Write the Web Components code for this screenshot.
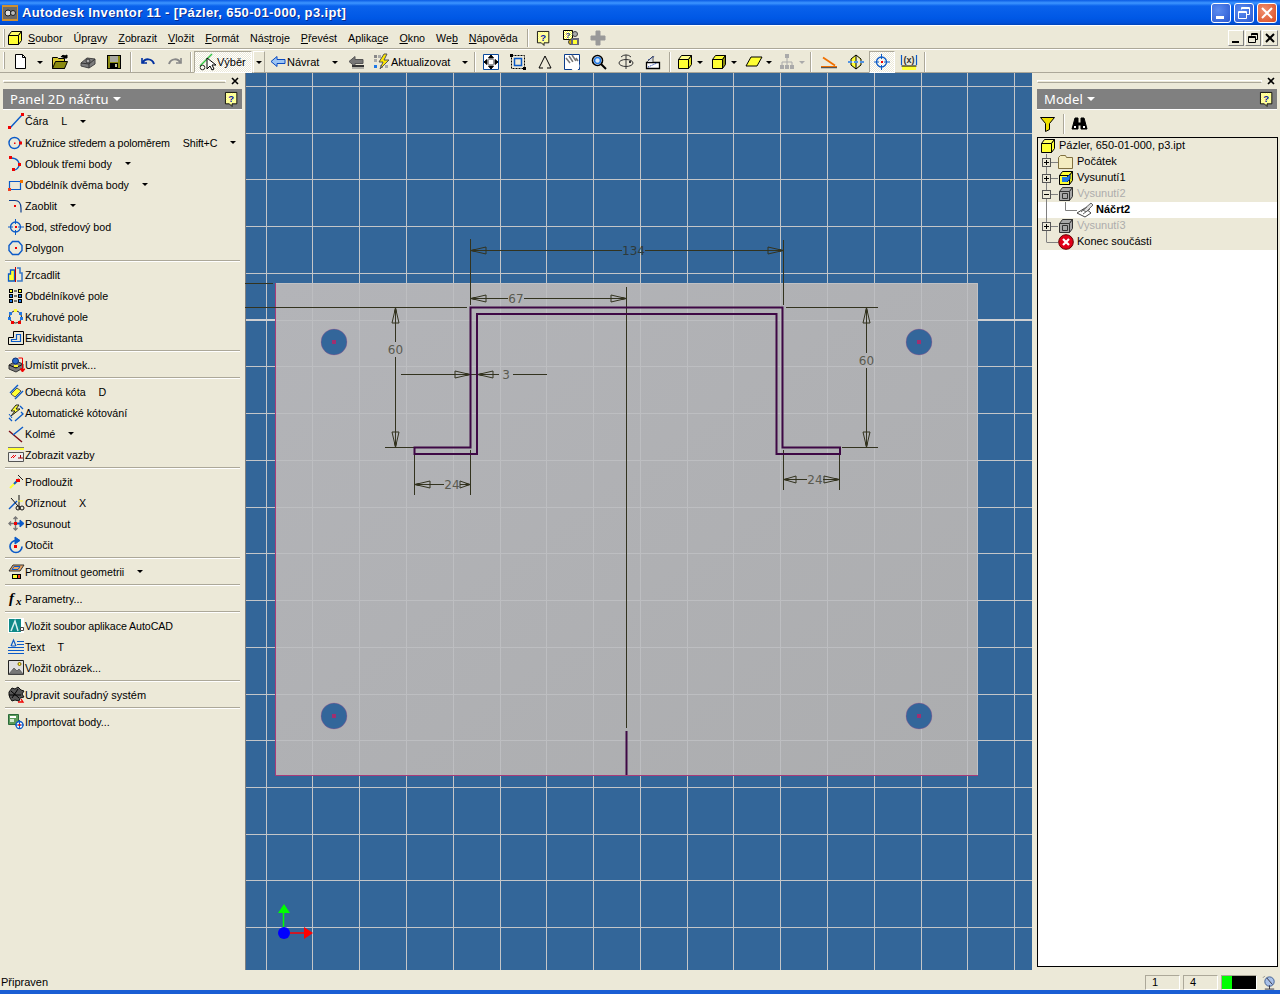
<!DOCTYPE html>
<html lang="cs">
<head>
<meta charset="utf-8">
<title>Autodesk Inventor 11</title>
<style>
    html, body { margin: 0; height: 100%; overflow: hidden; }
    body { font: 11px "Liberation Sans", Tahoma, sans-serif; color: #000; background: #ece9d8; }
</style>
</head>
<body>
<inv-app>
    <inv-titlebar slot="title">Autodesk Inventor 11 - [Pázler, 650-01-000, p3.ipt]</inv-titlebar>
    <inv-menubar slot="menu">
        <inv-menu-item><u>S</u>oubor</inv-menu-item>
        <inv-menu-item>Úpr<u>a</u>vy</inv-menu-item>
        <inv-menu-item><u>Z</u>obrazit</inv-menu-item>
        <inv-menu-item><u>V</u>ložit</inv-menu-item>
        <inv-menu-item><u>F</u>ormát</inv-menu-item>
        <inv-menu-item>Nás<u>t</u>roje</inv-menu-item>
        <inv-menu-item><u>P</u>řevést</inv-menu-item>
        <inv-menu-item>Aplika<u>c</u>e</inv-menu-item>
        <inv-menu-item><u>O</u>kno</inv-menu-item>
        <inv-menu-item>We<u>b</u></inv-menu-item>
        <inv-menu-item><u>N</u>ápověda</inv-menu-item>
    </inv-menubar>
    <inv-toolbar slot="tools">
        <inv-tool icon="new" w="26"></inv-tool><inv-drop w="12"></inv-drop>
        <inv-tool icon="open" w="28"></inv-tool><inv-tool icon="part3d" w="27"></inv-tool><inv-tool icon="save" w="26"></inv-tool>
        <inv-sep w="7"></inv-sep>
        <inv-tool icon="undo" w="27"></inv-tool><inv-tool icon="redo" w="27"></inv-tool>
        <inv-sep w="6"></inv-sep>
        <inv-tool icon="select" w="58" pressed>Výběr</inv-tool><inv-drop w="13" boxed></inv-drop>
        <inv-tool icon="back" w="63">Návrat</inv-tool><inv-drop w="14"></inv-drop>
        <inv-tool icon="backgrey" w="27"></inv-tool>
        <inv-tool icon="update" w="88">Aktualizovat</inv-tool><inv-drop w="16"></inv-drop>
        <inv-sep w="4"></inv-sep>
        <inv-tool icon="zoomall" w="27"></inv-tool><inv-tool icon="zoomwin" w="27"></inv-tool><inv-tool icon="zoomsel" w="27"></inv-tool><inv-tool icon="pan" w="27"></inv-tool><inv-tool icon="zoom" w="27"></inv-tool><inv-tool icon="orbit" w="27"></inv-tool><inv-tool icon="look" w="27"></inv-tool>
        <inv-sep w="8"></inv-sep>
        <inv-tool icon="box1" w="22"></inv-tool><inv-drop w="8"></inv-drop>
        <inv-tool icon="box2" w="22" style="margin-left:4px"></inv-tool><inv-drop w="8"></inv-drop>
        <inv-tool icon="plane" w="22" style="margin-left:5px"></inv-tool><inv-drop w="8"></inv-drop>
        <inv-tool icon="treeicon" w="22" style="margin-left:3px"></inv-tool><inv-drop w="8" disabled></inv-drop>
        <inv-sep w="9"></inv-sep>
        <inv-tool icon="angle" w="27"></inv-tool><inv-tool icon="sym" w="27"></inv-tool><inv-tool icon="bod" w="26" pressed></inv-tool><inv-tool icon="fxbar" w="28"></inv-tool>
        <inv-sep w="3"></inv-sep>
    </inv-toolbar>
    <inv-panel slot="left" label="Panel 2D náčrtu" style="width:245px">
        <inv-item icon="cara" shortcut="L" arrow style="height:22px">Čára</inv-item>
        <inv-item icon="kruznice" shortcut="Shift+C" arrow style="letter-spacing:-.13px">Kružnice středem a poloměrem</inv-item>
        <inv-item icon="oblouk" arrow>Oblouk třemi body</inv-item>
        <inv-item icon="obdelnik" arrow>Obdélník dvěma body</inv-item>
        <inv-item icon="zaoblit" arrow>Zaoblit</inv-item>
        <inv-item icon="bod">Bod, středový bod</inv-item>
        <inv-item icon="polygon">Polygon</inv-item>
        <inv-divider></inv-divider>
        <inv-item icon="zrcadlit">Zrcadlit</inv-item>
        <inv-item icon="obdpole">Obdélníkové pole</inv-item>
        <inv-item icon="kruhpole">Kruhové pole</inv-item>
        <inv-item icon="ekvi">Ekvidistanta</inv-item>
        <inv-divider></inv-divider>
        <inv-item icon="umistit">Umístit prvek...</inv-item>
        <inv-divider></inv-divider>
        <inv-item icon="kota" shortcut="D">Obecná kóta</inv-item>
        <inv-item icon="autokota">Automatické kótování</inv-item>
        <inv-item icon="kolme" arrow>Kolmé</inv-item>
        <inv-item icon="vazby">Zobrazit vazby</inv-item>
        <inv-divider></inv-divider>
        <inv-item icon="prodlouzit">Prodloužit</inv-item>
        <inv-item icon="oriznout" shortcut="X">Oříznout</inv-item>
        <inv-item icon="posunout">Posunout</inv-item>
        <inv-item icon="otocit">Otočit</inv-item>
        <inv-divider></inv-divider>
        <inv-item icon="promitnout" arrow>Promítnout geometrii</inv-item>
        <inv-divider></inv-divider>
        <inv-item icon="fx">Parametry...</inv-item>
        <inv-divider></inv-divider>
        <inv-item icon="autocad" style="letter-spacing:-.1px">Vložit soubor aplikace AutoCAD</inv-item>
        <inv-item icon="text" shortcut="T">Text</inv-item>
        <inv-item icon="obrazek">Vložit obrázek...</inv-item>
        <inv-divider></inv-divider>
        <inv-item icon="souradny" style="font-size:11px">Upravit souřadný systém</inv-item>
        <inv-divider></inv-divider>
        <inv-item icon="importbody">Importovat body...</inv-item>
    </inv-panel>
    <inv-viewport slot="canvas"></inv-viewport>
    <inv-panel slot="right" label="Model" model style="width:248px">
        <inv-browser>
            <inv-node icon="root" level="0">Pázler, 650-01-000, p3.ipt</inv-node>
            <inv-node icon="folder" level="1" exp="+">Počátek</inv-node>
            <inv-node icon="extrude" level="1" exp="+">Vysunutí1</inv-node>
            <inv-node icon="extrudeoff" level="1" exp="-" muted>Vysunutí2</inv-node>
            <inv-node icon="sketch" level="2" selected>Náčrt2</inv-node>
            <inv-node icon="extrudeoff" level="1" exp="+" muted>Vysunutí3</inv-node>
            <inv-node icon="stop" level="1" last>Konec součásti</inv-node>
        </inv-browser>
    </inv-panel>
    <inv-statusbar slot="status">Připraven</inv-statusbar>
</inv-app>

<script>
    const r = (x, y, w, h, c) => `<rect x="${x}" y="${y}" width="${w}" height="${h}" fill="${c}"/>`;
    const p = (d, s = "#000", f = "none", w = 1) => `<path d="${d}" stroke="${s}" fill="${f}" stroke-width="${w}"/>`;
    const c = (x, y, rad, s, f = "none", w = 1) => `<circle cx="${x}" cy="${y}" r="${rad}" stroke="${s}" fill="${f}" stroke-width="${w}"/>`;
    const BLUE = "#0a5ac8", RED = "#f00000", YEL = "#ffff33";

    const cube = (f, s = "#000", top = f, side = f) =>
        p("M1.5 5.5h10v9h-10z", s, f) + p("M1.5 5.5l3-4h10l-3 4z", s, top) + p("M11.5 5.5l3-4v9l-3 4z", s, side);
    const dither = `<defs><pattern id="dith" width="2" height="2" patternUnits="userSpaceOnUse"><rect width="2" height="2" fill="#ffff33"/><rect width="1" height="1" fill="#fff"/><rect x="1" y="1" width="1" height="1" fill="#fff"/></pattern></defs>`;

    // 16x16 icons, drawn after the reference's toolbar and panel glyphs
    const ICONS = {
        cara: p("M2 15L14 2", BLUE, "none", 1.4) + r(0, 13, 3, 3, RED) + r(13, 0, 3, 3, RED),
        kruznice: c(6.5, 8, 5.5, BLUE, "none", 1.4) + r(6, 7.5, 1.5, 1.5, RED) + r(11, 6.5, 3, 3, RED),
        oblouk: p("M3 2c6 0 9 4 8 8-1 2-2 4-5 4", BLUE, "none", 1.3) + r(1, 0, 3, 3, RED) + r(10, 7, 3, 3, RED) + r(4, 12, 3, 3, RED),
        obdelnik: p("M1.5 4.5h11v8h-11z", BLUE, "none", 1.2) + r(0, 11, 3, 3, "#f04020") + r(12, 3, 3, 3, "#f07000"),
        zaoblit: p("M1 2.5h6c4 0 6 3 6 8v4", "#0a3c8c", "none", 1.2) + r(6, 7, 2, 2, RED),
        bod: c(7.5, 8, 5, BLUE, "none", 1.3) + p("M7.5 0v5M7.5 11v5M0 8h5M10 8h6", BLUE) + r(7, 7, 2, 2, RED),
        polygon: p("M4.5 1.5h6l3.5 4v5l-3.5 4h-6l-3.5-4v-5z", BLUE, "none", 1.4) + r(7, 7, 2, 2, RED),
        zrcadlit: p("M.5 14V7h2V3h4v11z", "#0a5ac8", YEL, 1.3) + p("M9 14h5V6h-2V1H9", "#3c7ac8", "none", 1.6) + p("M7.5 0v15", "#c00000"),
        obdpole: [1, 10].map(x => [1, 6, 11].map(y => `<rect x="${x}.5" y="${y}.5" width="3" height="3" stroke="#000" fill="${y == 1 ? YEL : "#1e78e6"}"/>`).join("")).join("") + p("M6 3h3M6 8h3M6 13h3", "#000"),
        kruhpole: c(7.5, 8, 6, "#222") + r(6, 0, 3, 3, YEL) + r(1, 3, 3, 3, "#1e78e6") + r(11, 3, 3, 3, "#1e78e6") + r(0, 8, 3, 3, "#1e78e6") + r(12, 8, 3, 3, "#1e78e6") + r(3, 12, 3, 3, RED) + r(10, 12, 3, 3, RED),
        ekvi: p("M.5 14.5v-7h5v-6h10v13z", "#000", "none") + p("M3.5 11.5v-2h5v-5h4v7z", "#0a5ac8", "none", 1.2),
        umistit: p("M1 8l7-4 7 3v4l-7 4-7-3z", "#333", "#7a7a7a") + p("M1 8l7 3 7-4", "#111") + c(7.5, 4, 3, "#0a2c70", "#2868c8") + r(6, 8, 4, 2, YEL) + p("M14.5 1h-4M14.5 1v11", RED) + p("M12 12h5l-2.500 3z", RED, RED),
        kota: p("M2 9L10 1", BLUE, "none", 1.4) + p("M7 15l8-8", BLUE, "none", 1.4) + p("M3 10l6-6 4 3-6 6z", "#555", YEL),
        autokota: p("M8 0L3 6h4L3 11l9-7H8l3-4z", "#222", YEL) + p("M12 1l3 3M1 13l3 3M13 7l2 2-8 7", BLUE, "none", 1.3) + p("M1 9l3 4", BLUE),
        kolme: p("M1 5l13 11", "#7a0a14", "none", 1.4) + p("M5 9l10-8", BLUE, "none", 1.4),
        vazby: r(0, 0, 16, 3, YEL) + p("M0 .5h16", "#777") + p("M.5 5.500h15v9h-15z", "#555", "#eee") + p("M3 11l3-3M5 11l3-3", RED) + p("M10 11h5M12.500 8v3", "#a00000"),
        prodlouzit: p("M2 14L11 5", YEL, "none", 2) + p("M6 10l5-5", "#0a5ac8", "none", 2) + r(8, 5, 4, 3, RED) + p("M10 1l5 5", "#222"),
        oriznout: p("M1 14l8-8", BLUE, "none", 1.4) + p("M3 3l7 8M11 0v14", "#111") + c(10, 13, 2, "#111") + c(14, 13, 2, "#111") + p("M10 6h5", YEL),
        posunout: p("M7.500 1v13M1 7.500h8", "#777", "none", 1.4) + p("M5.500 3l2-2 2 2M5.500 12l2 2 2-2M3 5.500l-2 2 2 2", "#777", "none", 1.4) + p("M9 7.500h5", BLUE, "none", 2) + p("M12 4l4 3.500-4 3.500z", BLUE, BLUE) + r(6, 6, 3, 3, RED),
        otocit: p("M8 3.500a6 6 0 1 0 6 6", BLUE, "none", 1.7) + p("M7 0l5 3.500-5 3.500z", BLUE, BLUE) + r(6, 8, 3, 3, RED),
        promitnout: p("M5 1h11l-4 6H1z", "#333", "#f0a860") + p("M6 2.500h6l-2 3H4z", BLUE, "none") + r(4, 10, 9, 5, "#000") + r(5, 11, 4, 3, YEL) + r(10, 11, 2, 3, "#f04020"),
        fx: `<text x="1" y="12" font-family="Liberation Serif" font-style="italic" font-weight="700" font-size="15">f</text><text x="8" y="14" font-family="Liberation Serif" font-style="italic" font-weight="700" font-size="11">x</text>`,
        autocad: r(0, 0, 16, 15, "#fff") + r(1, 1, 12, 13, "#0f8a88") + p("M3 13L7 3l3 10", "#d8f0f0", "none", 1.5) + p("M12.500 9.500h3v3h-3z", "#444", "#fff"),
        text: p("M3 7L5.500 1 8 7M3.500 7h4", BLUE, "none", 1.2) + p("M9 2.500h7M9 5.500h7M0 8.500h16M0 11.500h16M0 14.500h16", BLUE),
        obrazek: p("M.5 .5h15v14H.5z", "#222", "#dfdfdf") + c(11.5, 4, 1.5, "#806000", YEL) + p("M1 14l5-6 3 3 2-2 4 5z", "#666", "#777"),
        souradny: p("M1 5l3-4 3 1 3-2 3 3 3 1-2 3 2 3-4 1-1 3-4-1-3 1-2-3-1-3z", "#111", "#555") + p("M3 4l8 7M10 2L4 11M1 8h12", "#000") + p("M10 15h5l-2-3", RED, "none", 1.3),
        importbody: p("M.5 .5h10v10H.5z", "#2a6a3a", "#5a9a5a") + r(2, 2, 6, 2, "#fff") + r(2, 5, 4, 3, "#cfe8cf") + c(11.5, 11, 3.5, BLUE, "#fff", 1.3) + p("M11.500 6v9M7 11h9", BLUE) + r(10.5, 10, 2, 2, RED),

        new: p("M2.500 .5h7l3 3v11h-10z", "#000", "#fff") + p("M9.500 .5v3h3", "#000"),
        open: p("M.5 14.500v-11h5l1 1h6v10z", "#000", "#d8c830") + p("M.5 14.500l3-7h12l-3 7z", "#000", "#8a8a10") + p("M9 3c1-2 3-2 4-1l2-1v3h-3", "#000", "#000"),
        part3d: p("M1 9l6-5 8 1v5l-6 4-8-2z", "#444", "#7c7c7c") + p("M1 9l8 1 6-5M9 10v4", "#333") + c(8, 7, 2, "#333", "#aaa"),
        save: r(1, 1, 14, 14, "#000") + r(2, 2, 12, 12, "#8a8a10") + r(4, 2, 8, 6, "#a8a8a0") + r(4, 9, 8, 5, "#000") + r(9, 10, 2, 3, "#c8c8a8"),
        undo: p("M2 4v5h5", "#0030a0", "none", 1.6) + p("M2.500 9C5 4 12 4 14 10", "#0030a0", "none", 2),
        redo: p("M14 4v5H9", "#888", "none", 1.6) + p("M13.500 9C11 4 4 4 2 10", "#888", "none", 2),
        select: p("M0 12L12 0", "#30c040", "none", 1.4) + c(2.500, 13.500, 2.300, "#333") + p("M7 4v11l3-3 2 4 2-1-2-4h4z", "#000", "#fff"),
        back: p("M1 7.500l6-5v3h8v4H7v3z", "#0a4ac0", "#9cc4f4"),
        backgrey: p("M1 7.500l6-5v3h8v4H7v3z", "#555", "#777") + p("M4 12h12", "#333", "none", 2) + p("M4 14h12", "#777"),
        update: r(0, 1, 3, 3, "#888") + r(4, 1, 3, 3, "#aaa") + r(0, 5, 3, 3, "#aaa") + r(0, 11, 3, 3, "#1e78e6") + r(11, 11, 3, 3, "#aaa") + r(6, 11, 3, 3, "#999") + p("M10 0L5 8h4L6 15l9-9h-5l3-6z", "#555", "#ffe800"),
        zoomall: p("M.5 .5h15v15H.5z", "#0a4a9c", "#fff", 1) + p("M8 1l-2.500 3h5zM8 15l-2.500-3h5zM1 8l3-2.500v5zM15 8l-3-2.500v5z", "#000", "#000") + `<path d="M5.500 5.500h5v5h-5z" stroke="#333" fill="none" stroke-dasharray="1 1"/>`,
        zoomwin: `<path d="M1.500 1.500h13v13h-13z" stroke="#000" fill="none" stroke-dasharray="2 1"/>` + r(0, 0, 3, 3, "#000") + r(13, 13, 3, 3, "#000") + p("M4.500 4.500h7v7h-7z", "#0a5ac8", "#ece9d8", 1.500),
        zoomsel: p("M5 8l3-6 3 6M2 14l3-6M14 14l-3-6M2 14h4M10 14h4", "#000"),
        pan: p("M.5 .5h15v15H.5z", "#0a3c8c", "#fff", 1) + p("M2 4l4 5M5 2l4 6M8 1l4 6M12 4l2 3", "#777", "none", 1.500) + `<circle cx="11" cy="12" r="4.500" fill="#fff"/>`,
        zoom: c(6.5, 6.5, 5, "#000", "#fff", 1.6) + c(6.5, 6.5, 3, "#1e78e6", "#d8e8f8", 1.5) + p("M10 10l5 5", "#000", "none", 2),
        orbit: `<ellipse cx="8" cy="9" rx="7" ry="3.500" stroke="#333" fill="none"/>` + p("M8 1v14", "#333") + p("M3 3a7 7 0 0 1 10 0", "#333") + r(11, 7, 2, 2, "#333"),
        look: p("M1.500 8.500h13v6h-13z", "#000", "#fff", 1.3) + p("M2 8l6-6v6", "#555", "#ddd") + `<path d="M3 13l9-4M3 6l7-4" stroke="#0a2c9c" fill="none" stroke-dasharray="1 1"/>`,
        box1: cube(YEL, "#000", "#ffff88", "#e0e020"),
        box2: cube(YEL, "#000", YEL, "#8a8a10"),
        plane: p("M5 3h11l-5 9H0z", "#000", YEL),
        treeicon: r(6, 0, 4, 4, "#aaa") + r(1, 11, 4, 4, "#aaa") + r(6, 11, 4, 4, "#aaa") + r(11, 11, 4, 4, "#aaa") + p("M8 4v7M3 11V8h10v3", "#aaa"),
        angle: p("M2 3.500l12 8", "#f07000", "none", 1.800) + p("M0 13.500h16", "#555", "none", 1.500) + p("M0 12.500h16", "#f07000"),
        sym: p("M3 7V5l5-4v6M13 7V5L8 1M3 9v2l5 4V9M13 9v2l-5 4", "#000", YEL) + `<path d="M0 8h16" stroke="#1e78e6" stroke-width="1.300" stroke-dasharray="4 2"/>`,
        fxbar: r(1, 12, 14, 4, YEL) + p("M.5 12h15", "#000") + p("M.5 1v10M15.500 1v10", "#0a5ac8", "none", 1.200) + `<text x="8" y="9" text-anchor="middle" font-family="Liberation Sans" font-weight="700" font-size="9" fill="#333">(x)</text>`,

        root: cube(YEL, "#000", "#ffff66", YEL),
        folder: p("M.5 14.500V3.500l2-2h5l1 2h6v11z", "#807040", "#f4ecc0"),
        extrude: cube(YEL, "#000", YEL, "#e0e020") + r(4, 7, 5, 5, "#1e78e6") + p("M9 7l3-3v5l-3 3", "#0a2c70", "#1e78e6"),
        extrudeoff: cube("#a8a8a8", "#333") + p("M4.500 7.500h5v5h-5z", "#333"),
        sketch: p("M0 11l8-5 6 5-6 4z", "#444", "#fff") + p("M6 8l8-7 2 2-7 7zM4 10l6-5M6 12l7-5", "#666", "#ddd"),
        stop: c(8, 8, 7.300, "#600", "#e00018") + p("M5 5l6 6M11 5l-6 6", "#fff", "none", 2.200),

        filter: p("M.5 1.500h14l-5 6v6l-4 2v-8z", "#000", "#f0e000"),
        binoculars: p("M3 2h3v5h3V2h3l3 11H9V9H6v4H0z", "#000", "#000") + r(2, 10, 2, 2, "#fff") + r(11, 10, 2, 2, "#fff"),
        dish: c(8, 7, 5, "#3a5a90", "#a8c0e8") + p("M5 3l6 7M3 15h10M8 11v4", "#334") + p("M1 3l2-2", "#888"),
        appicon: r(0, 0, 16, 16, "#d09030") + r(1, 2, 14, 12, "#6a6a6a") + c(6, 8, 3, "#222", "#ddd") + c(11, 8, 2.500, "#222", "#bbb"),
        help: dither + p("M.5 .5h13v13H8v3l-3-3H.5z", "#000", "url(#dith)") + `<text x="7" y="11" text-anchor="middle" font-family="Liberation Sans" font-weight="700" font-size="11" fill="#0a1aa0">?</text>`,
        helpmix: dither + p("M.5 .5h9v9H.5z", "#000", "url(#dith)") + `<text x="5" y="8" text-anchor="middle" font-family="Liberation Sans" font-weight="700" font-size="8" fill="#0a1aa0">?</text>` + c(12, 4, 2.500, "#444", "#aaa") + c(8, 12, 2.500, "#444", "#d4b000") + r(8, 8, 8, 7, "#667") + r(10, 10, 4, 4, YEL),
        plus: p("M6 1h4v5h5v4h-5v5H6v-5H1V6h5z", "#999", "#999"),
    };
    const icon = (name, size = 16) => `<svg width="${size}" height="${size}" viewBox="0 0 16 16" style="display:block;flex:none;overflow:visible">${ICONS[name] || ""}</svg>`;

    class InvApp extends HTMLElement {
        constructor() {
            super();
            this.attachShadow({ mode: "open" });
            this.shadowRoot.innerHTML = `
                <style>
                    :host { display: flex; flex-direction: column; width: 1280px; height: 994px; }
                    #main { display: flex; height: 897px; }
                    #edge { height: 4px; background: #1a5ed4; }
                </style>
                <slot name="title"></slot>
                <slot name="menu"></slot>
                <slot name="tools"></slot>
                <div id="main">
                    <slot name="left"></slot>
                    <slot name="canvas"></slot>
                    <slot name="right"></slot>
                </div>
                <slot name="status"></slot>
                <div id="edge"></div>
            `;
        }
    }

    class InvTitlebar extends HTMLElement {
        constructor() {
            super();
            this.attachShadow({ mode: "open" });
            this.shadowRoot.innerHTML = `
                <style>
                    :host {
                        display: flex; align-items: center; height: 26px; padding-left: 2px; box-sizing: border-box;
                        background: linear-gradient(#0a5be4 0, #3d95ff 3px, #0a62ec 6px, #0058e6 18px, #0050d8 23px, #003ea8 26px);
                        border-bottom: 1px solid #fff;
                    }
                    #text {
                        flex: 1; margin-left: 4px; color: #fff; font: bold 13px "Liberation Sans", sans-serif;
                        letter-spacing: .38px; text-shadow: 1px 1px #0a2c90;
                    }
                    .b {
                        width: 18px; height: 18px; margin-right: 3px; border: 1px solid #fff; border-radius: 3px;
                        background: radial-gradient(circle at 35% 35%, #5c8cf0, #2a58d0); position: relative;
                    }
                    .b svg { display: block; }
                    #close { background: radial-gradient(circle at 35% 35%, #f09070, #d84a20); }
                </style>
                ${icon("appicon")}
                <span id="text"><slot></slot></span>
                <div class="b"><svg width="18" height="18"><rect x="4" y="12" width="8" height="3" fill="#fff"/></svg></div>
                <div class="b"><svg width="18" height="18" fill="none" stroke="#fff"><path d="M6.500 5.500v-2h8v7h-3"/><path d="M3.500 7.500h8v7h-8z"/><path d="M6.500 4.500h8M3.500 8.500h8"/></svg></div>
                <div class="b" id="close"><svg width="18" height="18" stroke="#fff" stroke-width="2"><path d="M4 4l10 10M14 4L4 14"/></svg></div>
            `;
        }
    }

    class InvMenubar extends HTMLElement {
        constructor() {
            super();
            this.attachShadow({ mode: "open" });
            this.shadowRoot.innerHTML = `
                <style>
                    :host {
                        display: flex; align-items: center; height: 24px; padding-left: 3px; box-sizing: border-box;
                        background: #ece9d8; border-bottom: 1px solid #fff; box-shadow: inset 0 -1px #aca899;
                    }
                    #grip { width: 1px; height: 18px; background: #fff; border-right: 1px solid #aca899; margin-right: 2px; }
                    #items { display: flex; gap: 11px; margin-left: 5px; padding-top: 1px; font-size: 10.7px; }
                    #sep { width: 1px; height: 18px; background: #aca899; border-right: 1px solid #fff; margin: 0 8px 0 9px; }
                    .ext { margin-right: 9px; }
                    #mdi { margin-left: auto; display: flex; gap: 1px; margin-right: 2px; }
                    .m { width: 16px; height: 16px; background: #ece9d8; border-top: 1px solid #fff; border-left: 1px solid #fff; border-right: 1px solid #808080; border-bottom: 1px solid #808080; box-sizing: border-box; }
                </style>
                <div id="grip"></div>
                ${icon("root")}
                <div id="items"><slot></slot></div>
                <div id="sep"></div>
                <div class="ext">${icon("help", 14)}</div>
                <div class="ext" style="margin-left:3px">${icon("helpmix")}</div>
                <div class="ext" style="margin-left:2px">${icon("plus")}</div>
                <div id="mdi">
                    <div class="m"><svg width="14" height="14"><rect x="3" y="10" width="7" height="2"/></svg></div>
                    <div class="m"><svg width="14" height="14" fill="none" stroke="#000"><path d="M5.500 4.500v-2h6v6h-2"/><path d="M2.500 5.500h7v6h-7z"/><path d="M5.500 3.500h6M2.500 6.500h7"/></svg></div>
                    <div class="m"><svg width="14" height="14" stroke="#000" stroke-width="2"><path d="M3 3l8 8M11 3l-8 8"/></svg></div>
                </div>
            `;
        }
    }

    class InvMenuItem extends HTMLElement {
        constructor() {
            super();
            this.attachShadow({ mode: "open" });
            this.shadowRoot.innerHTML = `<style>:host { display: block; white-space: nowrap; }</style><slot></slot>`;
        }
    }

    class InvToolbar extends HTMLElement {
        constructor() {
            super();
            this.attachShadow({ mode: "open" });
            this.shadowRoot.innerHTML = `
                <style>
                    :host {
                        display: flex; align-items: center; height: 23px; padding: 2px 0 0 8px; box-sizing: border-box;
                        background: #ece9d8; border-bottom: 1px solid #aca899; position: relative;
                    }
                    #grip { position: absolute; left: 3px; top: 2px; width: 1px; height: 17px; background: #fff; border-right: 1px solid #aca899; }
                </style>
                <div id="grip"></div>
                <slot></slot>
            `;
        }
    }

    class InvTool extends HTMLElement {
        connectedCallback() {
            if (this.shadowRoot) return;
            this.attachShadow({ mode: "open" });
            const w = this.getAttribute("w");
            const hasText = this.textContent.trim().length > 0;
            this.shadowRoot.innerHTML = `
                <style>
                    :host {
                        display: flex; align-items: center; flex: none; width: ${w}px; height: 22px; box-sizing: border-box;
                        justify-content: ${hasText ? "flex-start" : "center"}; padding-left: ${hasText ? 5 : 0}px; gap: 1px; white-space: nowrap;
                    }
                    :host([pressed]) {
                        border: 1px solid; border-color: #aca899 #fff #fff #aca899;
                        background: repeating-conic-gradient(#fff 0 25%, #ece9d8 0 50%) 0 0 / 2px 2px;
                    }
                </style>
                ${icon(this.getAttribute("icon"))}
                <slot></slot>
            `;
        }
    }

    class InvDrop extends HTMLElement {
        connectedCallback() {
            if (this.shadowRoot) return;
            this.attachShadow({ mode: "open" });
            this.shadowRoot.innerHTML = `
                <style>
                    :host { display: flex; align-items: center; justify-content: center; flex: none; width: ${this.getAttribute("w")}px; height: 22px; box-sizing: border-box; }
                    :host([boxed]) { border: 1px solid; border-color: #fff #aca899 #aca899 #fff; margin-left: 1px; width: 12px; }
                    i { width: 0; height: 0; border: 3px solid transparent; border-top: 3px solid #000; border-bottom: 0; margin-top: 1px; }
                    :host([disabled]) i { border-top-color: #aaa; }
                </style>
                <i></i>
            `;
        }
    }

    class InvSep extends HTMLElement {
        connectedCallback() {
            if (this.shadowRoot) return;
            this.attachShadow({ mode: "open" });
            this.shadowRoot.innerHTML = `
                <style>
                    :host { display: flex; justify-content: center; flex: none; width: ${this.getAttribute("w")}px; }
                    i { display: block; width: 1px; height: 20px; background: #aca899; border-right: 1px solid #fff; }
                </style>
                <i></i>
            `;
        }
    }

    class InvPanel extends HTMLElement {
        connectedCallback() {
            if (this.shadowRoot) return;
            this.attachShadow({ mode: "open" });
            const model = this.hasAttribute("model");
            this.shadowRoot.innerHTML = `
                <style>
                    :host { display: flex; flex-direction: column; flex: none; box-sizing: border-box; background: #ece9d8; padding-top: 6px; padding-left: ${model ? 5 : 3}px; }
                    #grip { display: flex; align-items: center; height: 4px; margin-right: ${model ? 5 : 6}px; }
                    #grip i { flex: 1; height: 3px; border: solid #fff; border-width: 1px 1px 0 1px; background: #ece9d8; border-bottom: 1px solid #aca899; box-sizing: border-box; margin-right: 5px; }
                    #grip svg { display: block; }
                    #head {
                        display: flex; align-items: center; height: 20px; margin-top: 6px; margin-right: 3px; padding-left: 7px; background: #808080; color: #fff;
                        font: 13px "Noto Sans", sans-serif; letter-spacing: .1px; border-bottom: 1px solid #fff;
                    }
                    #head b { width: 0; height: 0; border: 4px solid transparent; border-top: 4px solid #fff; border-bottom: 0; margin-left: 4px; }
                    #head svg { margin-left: auto; margin-right: 3px; }
                    #body { display: flex; flex-direction: column; flex: 1; min-height: 0; }
                </style>
                <div id="grip"><i></i><svg width="8" height="8" stroke="#000" stroke-width="1.600"><path d="M1 1l6 6M7 1l-6 6"/></svg></div>
                <div id="head"><span>${this.getAttribute("label")}</span><b></b>${icon("help", 14)}</div>
                ${model ? `<div style="display:flex;align-items:center;height:27px;padding-left:3px">${icon("filter")}<div style="width:1px;height:20px;background:#aca899;border-right:1px solid #fff;margin:0 7px"></div>${icon("binoculars")}</div>` : ""}
                <div id="body"><slot></slot></div>
            `;
        }
    }

    class InvItem extends HTMLElement {
        connectedCallback() {
            if (this.shadowRoot) return;
            this.attachShadow({ mode: "open" });
            const sc = this.getAttribute("shortcut");
            this.shadowRoot.innerHTML = `
                <style>
                    :host { display: flex; align-items: center; height: 21px; padding-left: 5px; white-space: nowrap; flex: none; font-size: 10.7px; }
                    #i { width: 17px; flex: none; }
                    #sc { margin-left: 13px; }
                    b { width: 0; height: 0; border: 3px solid transparent; border-top: 3px solid #000; border-bottom: 0; margin-left: 13px; }
                </style>
                <div id="i">${icon(this.getAttribute("icon"))}</div>
                <slot></slot>
                ${sc ? `<span id="sc">${sc}</span>` : ""}
                ${this.hasAttribute("arrow") ? "<b></b>" : ""}
            `;
        }
    }

    class InvDivider extends HTMLElement {
        constructor() {
            super();
            this.attachShadow({ mode: "open" });
            this.shadowRoot.innerHTML = `
                <style>
                    :host { display: flex; align-items: center; height: 6px; padding: 0 5px 0 2px; flex: none; }
                    i { display: block; flex: 1; height: 1px; background: #aca899; border-bottom: 1px solid #fff; }
                </style>
                <i></i>
            `;
        }
    }

    class InvBrowser extends HTMLElement {
        constructor() {
            super();
            this.attachShadow({ mode: "open" });
            this.shadowRoot.innerHTML = `
                <style>
                    :host { display: block; flex: 1; margin: 0 2px 3px 0; background: #fff; border: 1px solid #000; }
                </style>
                <slot></slot>
            `;
        }
    }

    class InvNode extends HTMLElement {
        connectedCallback() {
            if (this.shadowRoot) return;
            this.attachShadow({ mode: "open" });
            const level = +this.getAttribute("level");
            const exp = this.getAttribute("exp");
            const last = this.hasAttribute("last");
            const width = [2, 20, 39][level];
            let g = "";
            if (level == 0) g = `<path d="M8.500 14v2" stroke="#808080"/>`;
            if (level == 1) g = `<path d="M8.500 0V${last ? 8 : 16}M8.500 8.500H20" stroke="#808080"/>`;
            if (level == 2) g = `<path d="M8.500 0v16M27.500 0v8.500H39" stroke="#808080"/>`;
            if (exp) g += `<rect x="4.500" y="4.500" width="8" height="8" fill="#ece9d8" stroke="#555"/><path d="M6 8.500h5${exp == "+" ? "M8.500 6v5" : ""}" stroke="#000"/>`;
            this.shadowRoot.innerHTML = `
                <style>
                    :host { display: flex; align-items: center; height: 16px; background: #ece9d8; white-space: nowrap; }
                    :host([selected]) { background: #fff; font-weight: 700; }
                    :host([muted]) { color: #acacac; }
                    svg.g { display: block; flex: none; fill: none; }
                    #t { margin: 0 0 2px 3px; }
                </style>
                <svg class="g" width="${width}" height="16">${g}</svg>
                ${icon(this.getAttribute("icon"))}
                <span id="t"><slot></slot></span>
            `;
        }
    }

    class InvStatusbar extends HTMLElement {
        constructor() {
            super();
            this.attachShadow({ mode: "open" });
            this.shadowRoot.innerHTML = `
                <style>
                    :host { display: flex; align-items: center; height: 20px; padding-left: 1px; background: #ece9d8; box-sizing: border-box; padding-top: 4px; }
                    #t { flex: 1; }
                    .cell { box-sizing: border-box; width: 35px; height: 15px; margin-right: 3px; border: 1px solid; border-color: #aca899 #fff #fff #aca899; padding-left: 6px; line-height: 13px; }
                    #bar { display: flex; padding: 0; width: 36px; margin-right: 0; }
                    #bar i { display: block; height: 100%; }
                </style>
                <span id="t"><slot></slot></span>
                <div class="cell">1</div>
                <div class="cell">4</div>
                <div class="cell" id="bar"><i style="width:10px;background:#00ff00"></i><i style="flex:1;background:#000"></i></div>
                <div style="margin:0 3px 0 5px">${icon("dish", 15)}</div>
            `;
        }
    }

    class InvViewport extends HTMLElement {
        constructor() {
            super();
            this.attachShadow({ mode: "open" });
            const ink = "#33331f", sketch = "#3e0845";
            let grid = "", faint = "";
            const xs = [266, 312, 359, 406, 453, 500, 546, 593, 640, 687, 733, 780, 827, 874, 921, 967, 1014];
            const ys = [86, 133, 179, 226, 273, 320, 366, 413, 460, 507, 553, 600, 647, 694, 740, 787, 834, 880, 927];
            for (const x of xs) grid += `<path d="M${x}.5 73V970" stroke="#c4c6c8"/>`;
            for (const y of ys) grid += y == 320 ? `<path d="M245 320H1032" stroke="#cfd0d2" stroke-width="2"/>` : `<path d="M245 ${y}.5H1032" stroke="#c4c6c8"/>`;
            for (const x of xs) if (x > 276 && x < 978) faint += `<path d="M${x}.5 283V775" stroke="#bdbec1"/>`;
            for (const y of ys) if (y > 283 && y < 775) faint += `<path d="M276 ${y}.5H978" stroke="#bdbec1"/>`;

            // open-tailed dimension arrow: tip at (x,y), dir is the way it points, len its length
            const arrow = (x, y, dir, len = 15) => {
                const dx = { l: -1, r: 1, u: 0, d: 0 }[dir], dy = { l: 0, r: 0, u: -1, d: 1 }[dir];
                const bx = x - dx * len, by = y - dy * len, nx = -dy, ny = dx;
                const mx = x - dx * 4, my = y - dy * 4;
                return `<path d="M${x} ${y}L${bx + nx * 3.5} ${by + ny * 3.5}L${bx - nx * 3.5} ${by - ny * 3.5}Z" fill="none" stroke="${ink}"/><path d="M${x} ${y}L${mx + nx} ${my + ny}L${mx - nx} ${my - ny}Z" fill="${ink}" stroke="${ink}"/>`;
            };
            const line = (x1, y1, x2, y2) => `<path d="M${x1} ${y1}L${x2} ${y2}" stroke="${ink}"/>`;
            const label = (x, y, t, col = "#5a5a50") => `<text x="${x}" y="${y + 4.500}" text-anchor="middle" font-family="DejaVu Sans" font-size="12" fill="${col}">${t}</text>`;
            const hole = (x, y) => `<circle cx="${x}" cy="${y}" r="13" fill="#33669a" stroke="#c04888" stroke-opacity=".3"/><rect x="${x - 2}" y="${y - 2}" width="4" height="4" fill="#a03070"/>`;

            this.shadowRoot.innerHTML = `
                <style>
                    :host { display: block; flex: 1; min-width: 0; background: #336699; }
                    svg { display: block; }
                </style>
                <svg width="787" height="897" viewBox="245 73 787 897">
                    <rect x="245" y="73" width="787" height="897" fill="#336699"/>
                    ${grid}
                    <path d="M245.500 73V970" stroke="#808080"/>
                    <defs><linearGradient id="plate" x1="0" y1="0" x2="1" y2="1"><stop offset="0" stop-color="#b3b4b8"/><stop offset="1" stop-color="#acadaf"/></linearGradient></defs>
                    <rect x="276" y="283" width="702" height="492" fill="url(#plate)"/>
                    ${faint}
                    <path d="M275.500 283V775.500H978" stroke="#a83a78" fill="none"/>
                    <path d="M276 283.500H977.500V775" stroke="#c0c1c4" fill="none"/>
                    ${hole(334, 342)}${hole(919, 342)}${hole(334, 716)}${hole(919, 716)}

                    ${line(245, 283.5, 273, 283.5)}
                    ${line(245, 307.5, 467, 307.5)}
                    ${line(786, 307.5, 878, 307.5)}
                    ${line(385, 447.5, 414, 447.5)}
                    ${line(842, 447.5, 878, 447.5)}
                    ${line(470.5, 239, 470.5, 305)}
                    ${line(783.5, 240, 783.5, 305)}
                    ${line(626.5, 287, 626.5, 728)}
                    <path d="M626.500 731V775" stroke="${sketch}" stroke-width="2"/>

                    ${line(471, 250.5, 622, 250.5)}${line(645, 250.5, 783, 250.5)}
                    ${arrow(471, 250.5, "l")}${arrow(783, 250.5, "r")}${label(633.5, 250.5, "134", "#2e3a3a")}
                    ${line(471, 298.5, 508, 298.5)}${line(524, 298.5, 626, 298.5)}
                    ${arrow(471, 298.5, "l")}${arrow(626, 298.5, "r")}${label(516, 298, "67")}
                    ${line(395.5, 308, 395.5, 342)}${line(395.5, 357, 395.5, 447)}
                    ${arrow(395.5, 308, "u")}${arrow(395.5, 447, "d")}${label(395.5, 349, "60")}
                    ${line(866.5, 308, 866.5, 353)}${line(866.5, 368, 866.5, 447)}
                    ${arrow(866.5, 308, "u")}${arrow(866.5, 447, "d")}${label(866.5, 360.5, "60")}
                    ${line(401, 374.5, 499, 374.5)}${line(513, 374.5, 547, 374.5)}
                    ${arrow(470, 374.5, "r")}${arrow(478, 374.5, "l")}${label(506, 374, "3")}
                    ${line(414.5, 455, 414.5, 495)}${line(470.5, 450, 470.5, 495)}
                    ${line(415, 484.5, 444, 484.5)}${line(460, 484.5, 470, 484.5)}
                    ${arrow(415, 484.5, "l")}${arrow(470, 484.5, "r", 10)}${label(452, 484.5, "24")}
                    ${line(783.5, 450, 783.5, 490)}${line(839.5, 450, 839.5, 490)}
                    ${line(784, 479.5, 807, 479.5)}${line(823, 479.5, 839, 479.5)}
                    ${arrow(784, 479.5, "l", 12)}${arrow(839, 479.5, "r")}${label(815, 479.5, "24")}

                    <path d="M414.500 447.500H470.500V307.500H782.500V447.500H840V454H776.500V314H477V454H414.500Z" fill="none" stroke="${sketch}" stroke-width="2"/>

                    <path d="M283.500 912V928" stroke="#00ff00" stroke-width="1.500"/>
                    <path d="M278 913L284 904L290 913Z" fill="#00ff00"/>
                    <path d="M290 933H304" stroke="#f00" stroke-width="1.500"/>
                    <path d="M304 927L313 933L304 939Z" fill="#f00"/>
                    <circle cx="284" cy="933" r="6" fill="#0000ff"/>
                </svg>
            `;
        }
    }

    customElements.define("inv-app", InvApp);
    customElements.define("inv-titlebar", InvTitlebar);
    customElements.define("inv-menubar", InvMenubar);
    customElements.define("inv-menu-item", InvMenuItem);
    customElements.define("inv-toolbar", InvToolbar);
    customElements.define("inv-tool", InvTool);
    customElements.define("inv-drop", InvDrop);
    customElements.define("inv-sep", InvSep);
    customElements.define("inv-panel", InvPanel);
    customElements.define("inv-item", InvItem);
    customElements.define("inv-divider", InvDivider);
    customElements.define("inv-browser", InvBrowser);
    customElements.define("inv-node", InvNode);
    customElements.define("inv-statusbar", InvStatusbar);
    customElements.define("inv-viewport", InvViewport);
</script>
</body>
</html>
